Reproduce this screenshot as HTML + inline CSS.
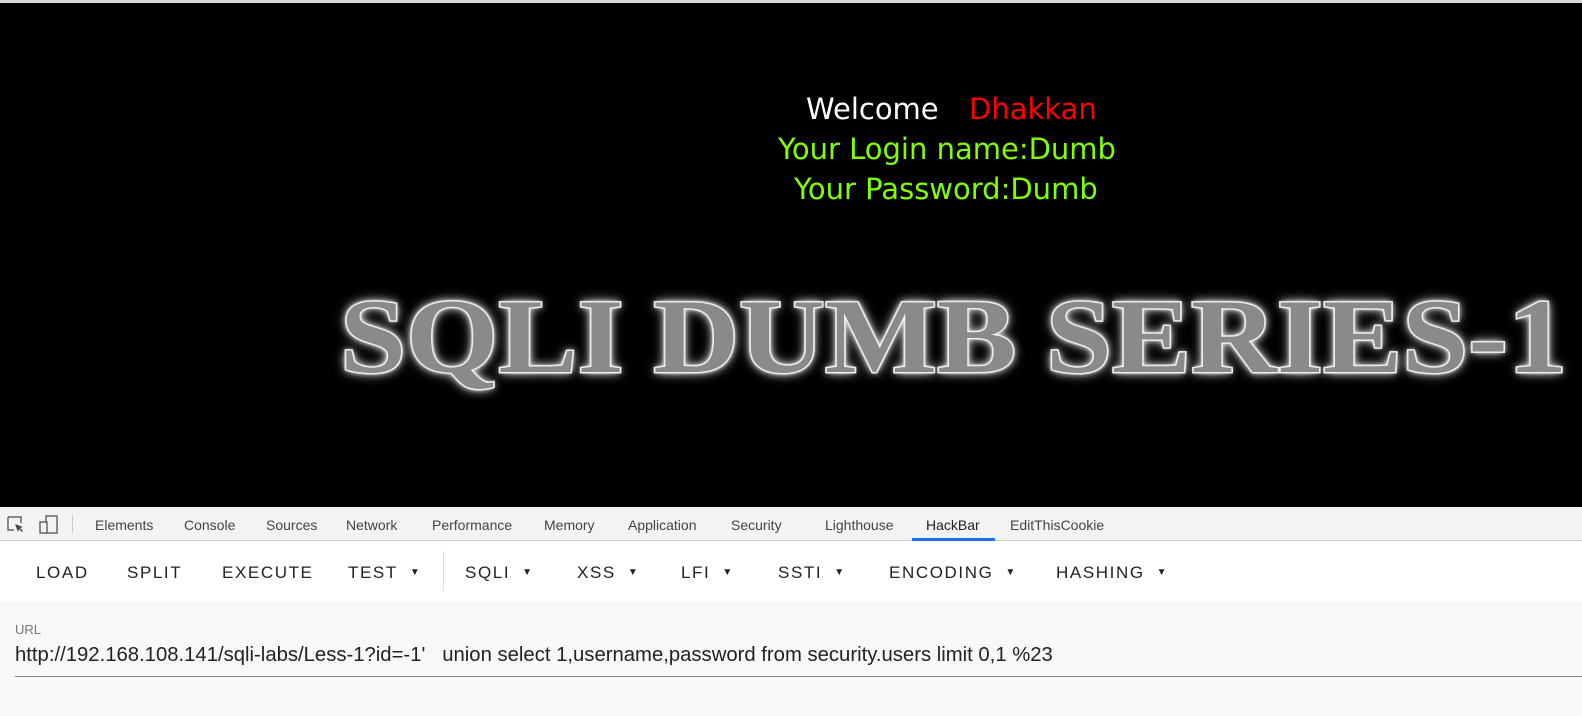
<!DOCTYPE html>
<html><head><style>
*{margin:0;padding:0;box-sizing:border-box}
body{width:1582px;height:716px;overflow:hidden;background:#000;font-family:"Liberation Sans",sans-serif;position:relative}
.top{position:absolute;left:0;top:0;width:1582px;height:3px;background:#d8d8dc}
.t{position:absolute;font-family:"DejaVu Sans","Liberation Sans",sans-serif;font-size:29px;white-space:nowrap}
.big{position:absolute;left:340px;top:276px;font-family:"Liberation Serif",serif;font-weight:bold;font-size:106px;color:#8a8a8a;white-space:nowrap;transform-origin:0 0;transform:scaleX(1.12);
text-shadow:0 0 2px #fff,0 0 4px #fff,0 0 8px #ddd,0 0 12px #aaa;-webkit-text-stroke:3px #eee;paint-order:stroke fill}
.dev{position:absolute;left:0;top:507px;width:1582px;height:34px;background:#f1f3f4;border-bottom:1px solid #ccc;font-size:14px;color:#444}
.dev span{position:absolute;top:10px}
.hb{position:absolute;left:0;top:541px;width:1582px;height:60px;background:#fff}
.hb span{position:absolute;top:22px;font-size:17px;letter-spacing:1.6px;color:#222}
.hb i{font-style:normal;font-size:10px;margin-left:12px;vertical-align:3px}
.url{position:absolute;left:0;top:601px;width:1582px;height:115px;background:#f8f8f8}
</style></head><body>
<div class="top"></div>
<div class="t" style="left:806px;top:92px;color:#fff">Welcome</div>
<div class="t" style="left:969px;top:92px;color:#f00">Dhakkan</div>
<div class="t" style="left:778px;top:132px;color:#7fff00">Your Login name:Dumb</div>
<div class="t" style="left:794px;top:172px;color:#7fff00">Your Password:Dumb</div>
<div class="big">SQLI DUMB SERIES-1</div>
<div class="dev">
<svg style="position:absolute;left:7px;top:9px" width="18" height="18"><path d="M1 1h13v6M1 1v13h6" fill="none" stroke="#666" stroke-width="1.5"/><path d="M8 8l8 3-3 1 3 3-1 1-3-3-1 3z" fill="#444"/></svg>
<svg style="position:absolute;left:38px;top:8px" width="22" height="20"><rect x="8" y="1" width="11" height="17" fill="none" stroke="#666" stroke-width="1.5"/><rect x="2" y="7" width="7" height="11" fill="#f1f3f4" stroke="#666" stroke-width="1.5"/></svg>
<div style="position:absolute;left:72px;top:8px;width:1px;height:18px;background:#ccc"></div>
<span style="left:95px">Elements</span><span style="left:184px">Console</span><span style="left:266px">Sources</span><span style="left:346px">Network</span><span style="left:432px">Performance</span><span style="left:544px">Memory</span><span style="left:628px">Application</span><span style="left:731px">Security</span><span style="left:825px">Lighthouse</span><span style="left:926px;color:#222">HackBar</span><span style="left:1010px">EditThisCookie</span>
<div style="position:absolute;left:912px;top:31px;width:83px;height:3px;background:#1a73e8"></div>
</div>
<div class="hb">
<span style="left:36px">LOAD</span><span style="left:127px">SPLIT</span><span style="left:222px">EXECUTE</span><span style="left:348px">TEST<i>▼</i></span>
<div style="position:absolute;left:443px;top:10px;width:1px;height:40px;background:#ddd"></div>
<span style="left:465px">SQLI<i>▼</i></span><span style="left:577px">XSS<i>▼</i></span><span style="left:681px">LFI<i>▼</i></span><span style="left:778px">SSTI<i>▼</i></span><span style="left:889px">ENCODING<i>▼</i></span><span style="left:1056px">HASHING<i>▼</i></span>
</div>
<div class="url">
<div style="position:absolute;left:15px;top:21px;font-size:13px;color:#777">URL</div>
<div style="position:absolute;left:15px;top:43px;font-size:20.3px;color:#222;white-space:nowrap">http://192.168.108.141/sqli-labs/Less-1?id=-1' &nbsp; union select 1,username,password from security.users limit 0,1 %23</div>
<div style="position:absolute;left:15px;top:75px;width:1567px;height:1px;background:#888"></div>
</div>
</body></html>
